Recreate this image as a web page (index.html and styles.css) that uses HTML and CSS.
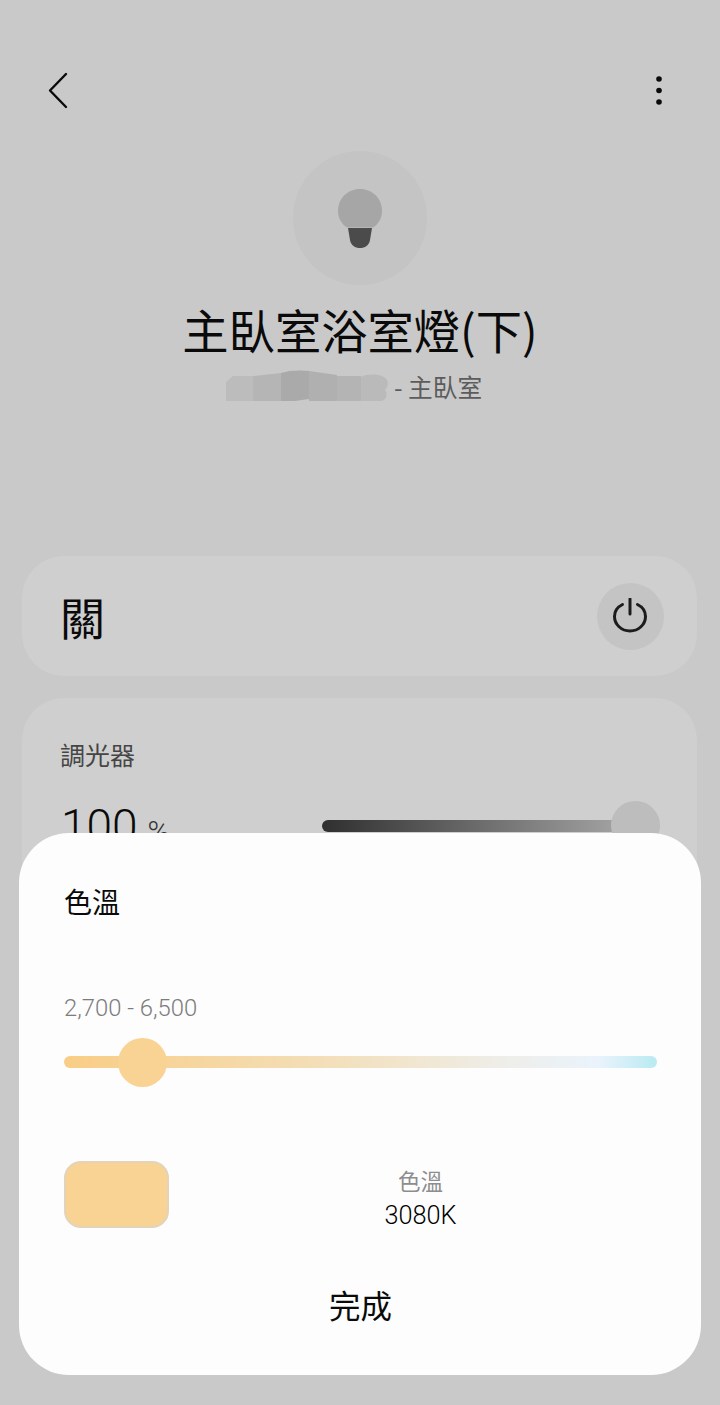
FILE: index.html
```html
<!DOCTYPE html>
<html lang="zh-Hant">
<head>
<meta charset="utf-8">
<title>色溫</title>
<link rel="stylesheet" href="styles.css">
</head>
<body>
<main class="page">
  <header class="topbar">
    <svg class="icon-back" width="24" height="40" viewBox="0 0 24 40"><path d="M20 3 L4 19.500 L20 36" fill="none" stroke="#0a0a0a" stroke-width="2.400" stroke-linecap="round" stroke-linejoin="round"/></svg>
    <svg class="icon-more" width="8" height="32" viewBox="0 0 8 32"><circle cx="4" cy="4" r="2.800" fill="#0a0a0a"/><circle cx="4" cy="15.500" r="2.800" fill="#0a0a0a"/><circle cx="4" cy="27" r="2.800" fill="#0a0a0a"/></svg>
  </header>
  <section class="device">
    <div class="bulb-disc">
      <svg width="46" height="62" viewBox="0 0 46 62"><path d="M10 40.500 C4 36.500 1 30.500 1 24 C1 11.500 10.500 2 23 2 C35.500 2 45 11.500 45 24 C45 30.500 42 36.500 36 40.500 Z" fill="#a6a6a6"/><path d="M11 41 H35 L33 53 C32 58.500 28 61 23 61 C18 61 14 58.500 13 53 Z" fill="#4b4b4b"/></svg>
    </div>
    <h1 class="device-name">主臥室浴室燈(下)</h1>
    <div class="device-place">
      <svg class="smudge" width="164" height="32" viewBox="0 0 164 32"><path d="M1 31 V12 L8 6 H28 V31 Z" fill="#bcbcbc"/><path d="M28 31 V6 L56 3 V31 Z" fill="#b5b5b5"/><path d="M56 3 C64 0 76 0 84 1 V29 L70 31 H56 Z" fill="#aaaaaa"/><path d="M84 1 L112 5 V31 H84 Z" fill="#b0b0b0"/><path d="M112 6 H136 V31 H112 Z" fill="#b4b4b4"/><path d="M136 7 C144 3 158 4 162 10 C164 14 162 18 160 20 C163 24 162 30 156 31 H136 Z" fill="#bababa"/></svg>
      <span>- 主臥室</span>
    </div>
  </section>
  <section class="card power-card">
    <span class="power-label">關</span>
    <div class="power-btn">
      <svg width="36" height="36" viewBox="1 1 36 36"><path d="M10.500 7.500 C5.500 10 2.500 14.500 2.500 19.500 C2.500 27.500 9.500 34 18 34 C26.500 34 33.500 27.500 33.500 19.500 C33.500 14.500 30.500 10 25.500 7.500" fill="none" stroke="#1c1c1c" stroke-width="3" stroke-linecap="round"/><path d="M18 2 V17" fill="none" stroke="#1c1c1c" stroke-width="3" stroke-linecap="round"/></svg>
    </div>
  </section>
  <section class="card dim-card">
    <div class="dim-label">調光器</div>
    <div class="dim-row">
      <div class="dim-value"><span class="dim-num">100</span><span class="dim-unit">%</span></div>
      <div class="dim-track"><div class="dim-thumb"></div></div>
    </div>
  </section>
</main>
<aside class="sheet">
  <h2 class="sheet-title">色溫</h2>
  <div class="range">2,700 - 6,500</div>
  <div class="ct-track"><div class="ct-thumb"></div></div>
  <div class="ct-info">
    <div class="swatch"></div>
    <div class="ct-read">
      <div class="ct-label">色溫</div>
      <div class="ct-value">3080K</div>
    </div>
  </div>
  <div class="done">完成</div>
</aside>
</body>
</html>
```
FILE: styles.css
```css
* { box-sizing: border-box; }
html, body { margin: 0; padding: 0; }
body {
  position: relative;
  width: 720px;
  height: 1405px;
  overflow: hidden;
  background: #c9c9c9;
  font-family: "Noto Sans CJK TC", "Noto Sans", sans-serif;
  color: #0a0a0a;
}
.page {
  display: flex;
  flex-direction: column;
  padding: 71px 23px 0 22px;
}
.topbar {
  display: flex;
  justify-content: space-between;
  align-items: center;
  height: 40px;
  padding: 0 34px 0 24px;
}
.device {
  display: flex;
  flex-direction: column;
  align-items: center;
  margin-top: 40px;
  padding-left: 1px;
}
.bulb-disc {
  width: 134px;
  height: 134px;
  border-radius: 50%;
  background: #c4c4c4;
  display: flex;
  align-items: center;
  justify-content: center;
}
.device-name {
  margin: 11px 0 0;
  font-size: 46.300px;
  font-weight: 400;
  line-height: 66px;
  white-space: nowrap;
}
.device-place {
  display: flex;
  align-items: center;
  gap: 5px;
  height: 34px;
  margin-top: 7px;
  padding-right: 13px;
  font-size: 24.700px;
  color: #5c5c5c;
}
.card { background: #cfcfcf; border-radius: 42px; }
.power-card {
  display: flex;
  justify-content: space-between;
  align-items: center;
  height: 120px;
  margin-top: 153px;
  padding: 0 33px 0 38px;
}
.power-label { font-size: 45px; line-height: 1; }
.power-btn {
  width: 67px;
  height: 67px;
  border-radius: 50%;
  background: #c4c4c4;
  display: flex;
  align-items: center;
  justify-content: center;
}
.dim-card {
  height: 320px;
  margin-top: 22px;
  padding: 39px 37px 0 38px;
}
.dim-label { font-size: 25px; line-height: 34px; color: #454545; }
.dim-row { display: flex; justify-content: space-between; align-items: center; margin-top: 32px; }
.dim-value { display: flex; align-items: baseline; gap: 10px; line-height: 1; padding-left: 1px; }
.dim-num { font-family: Roboto, sans-serif; font-weight: 300; font-size: 46px; }
.dim-unit { font-family: Roboto, sans-serif; font-weight: 300; font-size: 30px; color: #333; }
.dim-track {
  position: relative;
  width: 338px;
  height: 12px;
  border-radius: 6px;
  background: linear-gradient(90deg, #2f2f2f, #b2b2b2);
}
.dim-thumb {
  position: absolute;
  right: 0;
  top: -19px;
  width: 49px;
  height: 49px;
  border-radius: 50%;
  background: #bdbdbd;
}
.sheet {
  position: absolute;
  left: 19px;
  top: 833px;
  width: 682px;
  height: 542px;
  border-radius: 50px;
  background: #fdfdfd;
  padding: 0 44px 0 45px;
  display: flex;
  flex-direction: column;
}
.sheet-title {
  margin: 48px 0 0;
  font-size: 28px;
  font-weight: 400;
  line-height: 40px;
}
.range {
  margin-top: 70px;
  font-family: Roboto, sans-serif;
  font-weight: 300;
  font-size: 23.800px;
  line-height: 34px;
  color: #7c7c7c;
}
.ct-track {
  position: relative;
  height: 12px;
  margin-top: 31px;
  border-radius: 6px;
  background: linear-gradient(90deg, #f9cd85 0%, #f3dfba 45%, #eeeeea 75%, #eaf3fc 90%, #b9eaf2 100%);
}
.ct-thumb {
  position: absolute;
  left: 54px;
  top: -18px;
  width: 49px;
  height: 49px;
  border-radius: 50%;
  background: #f9d393;
}
.ct-info { display: flex; align-items: flex-start; margin-top: 93px; }
.swatch {
  width: 105px;
  height: 67px;
  border-radius: 17px;
  background: #f9d393;
  border: 2px solid #e3d3b8;
}
.ct-read { flex: 1; text-align: center; padding: 2px 0 0 15px; }
.ct-label { font-size: 22.500px; line-height: 34px; color: #8d8d8d; }
.ct-value { font-family: Roboto, sans-serif; font-weight: 300; font-size: 25.300px; line-height: 38px; color: #000; }
.done {
  margin-top: 47px;
  text-align: center;
  font-size: 31.500px;
  line-height: 44px;
}
```
